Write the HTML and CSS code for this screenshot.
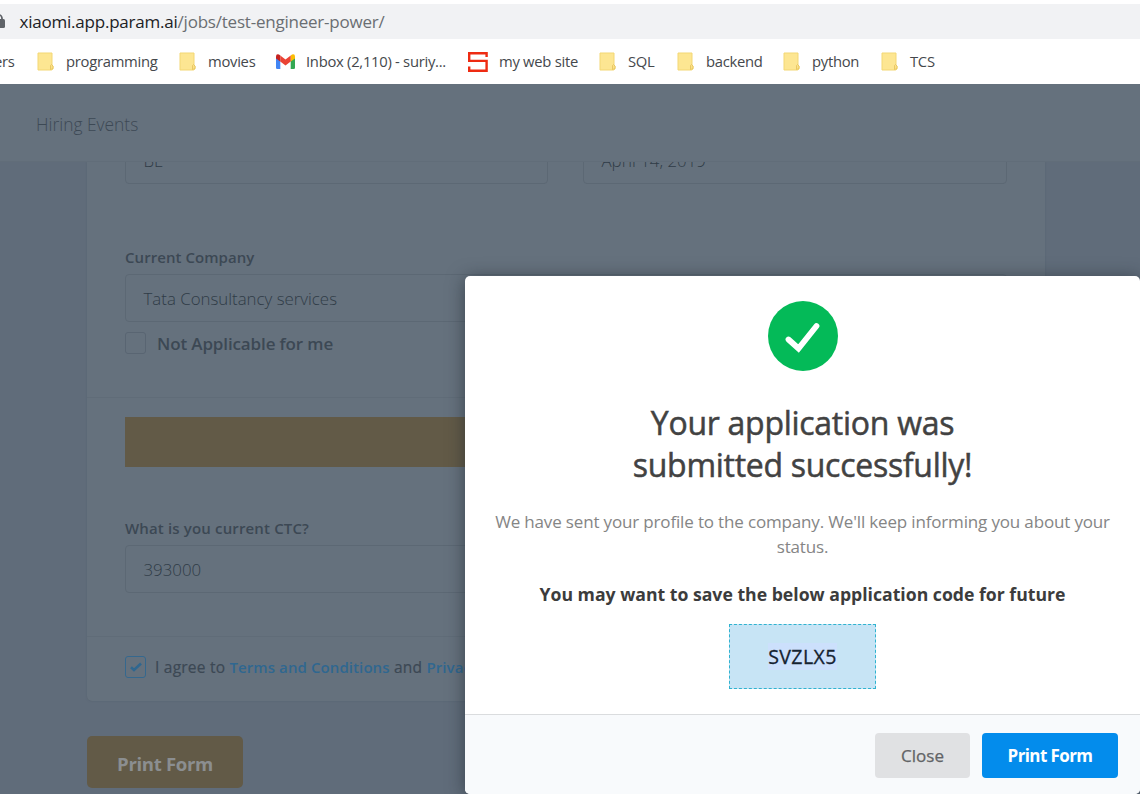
FILE: index.html
```
<!DOCTYPE html>
<html lang="en">
<head>
<meta charset="utf-8">
<title>Test Engineer - Power</title>
<link rel="stylesheet" href="styles.css">
</head>
<body>
<svg class="defs" width="0" height="0">
  <symbol id="folder" viewBox="0 0 17 19">
    <path d="M1 1h14v12l1 1v3l-1.500 1H1z" fill="#fde692" stroke="#f3d774"/>
    <path d="M13.500 17.500v-4l1-1 1.500 1.500v2.500z" fill="#fbe08a" stroke="#e5c257" stroke-width=".8"/>
  </symbol>
</svg>
<div class="urlbar">
  <svg class="lock" width="6" height="16" viewBox="0 0 6 16"><rect x="-7" y="5" width="12" height="9" rx="1.500" fill="#5f6368"/><path d="M-4 6V4.500a3 3.500 0 0 1 6 0V6" fill="none" stroke="#5f6368" stroke-width="1.800"/></svg>
  <div class="url"><span class="host">xiaomi.app.param.ai</span>/jobs/test-engineer-power/</div>
</div>
<div class="bookmarks">
  <div class="bm b0"><span>ers</span></div>
  <div class="bm"><svg width="17" height="19"><use href="#folder"/></svg><span>programming</span></div>
  <div class="bm"><svg width="17" height="19"><use href="#folder"/></svg><span>movies</span></div>
  <div class="bm b3"><svg width="19" height="15" viewBox="0 0 19 15"><path d="M0 3l4.300 3v9H1.300Q0 15 0 13.700z" fill="#4285f4"/><path d="M19 3l-4.300 3v9h3Q19 15 19 13.700z" fill="#34a853"/><path d="M14.700 1.500L16 .5q3-1 3 2V4.500l-4.300 3z" fill="#fbbc04"/><path d="M0 4.500V2.500q0-3 3-2l1.300 1v6z" fill="#c5221f"/><path d="M4.300 1.500L9.500 5.500l5.200-4v6L9.500 11.500 4.300 7.500z" fill="#ea4335"/></svg><span>Inbox (2,110) - suriy...</span></div>
  <div class="bm b4"><svg width="21" height="20" viewBox="0 0 21 20"><path d="M19.600 5V1.200H2.200V8.900H19.600V18.800H2.200V14.500" fill="none" stroke="#ee2b12" stroke-width="2.400"/></svg><span>my web site</span></div>
  <div class="bm"><svg width="17" height="19"><use href="#folder"/></svg><span>SQL</span></div>
  <div class="bm"><svg width="17" height="19"><use href="#folder"/></svg><span>backend</span></div>
  <div class="bm"><svg width="17" height="19"><use href="#folder"/></svg><span>python</span></div>
  <div class="bm"><svg width="17" height="19"><use href="#folder"/></svg><span>TCS</span></div>
</div>
<nav class="nav"><span>Hiring Events</span></nav>
<main class="page">
  <section class="card">
    <div class="row">
      <div class="input"><span>BE</span></div>
      <div class="input"><span>April 14, 2019</span></div>
    </div>
    <div class="group company">
      <label class="label">Current Company</label>
      <div class="input"><span>Tata Consultancy services</span></div>
      <div class="check"><span class="box"></span><span>Not Applicable for me</span></div>
    </div>
    <div class="group ctc">
      <div class="banner"></div>
      <label class="label question">What is you current CTC?</label>
      <div class="input"><span>393000</span></div>
    </div>
    <div class="group agree">
      <span class="box checked"><svg width="14" height="12" viewBox="0 0 14 12"><path d="M2 6.200l3 2.800L12 2.500" fill="none" stroke="#2f6790" stroke-width="2.600"/></svg></span>
      <span>I agree to <a>Terms and Conditions</a> and <a>Privacy Policy</a></span>
    </div>
  </section>
  <button class="submit">Print Form</button>
</main>
<div class="modal">
  <div class="body">
    <svg class="tick" width="70" height="70" viewBox="0 0 70 70"><circle cx="35" cy="35" r="35" fill="#04ba58"/><path d="M20.500 38.500L30.500 47.500 48.500 25" fill="none" stroke="#fff" stroke-width="5.800" stroke-linecap="round"/></svg>
    <h1>Your application was<br>submitted successfully!</h1>
    <p class="msg">We have sent your profile to the company. We'll keep informing you about your<br>status.</p>
    <p class="save">You may want to save the below application code for future</p>
    <div class="code"><span class="selected">SVZLX5</span></div>
  </div>
  <footer class="foot">
    <button class="btn close">Close</button>
    <button class="btn print">Print Form</button>
  </footer>
</div>
</body>
</html>
```
FILE: styles.css
```
* { box-sizing: border-box; }
body { margin: 0; width: 1140px; height: 794px; overflow: hidden; position: relative; display: flex; flex-direction: column; background: #fff; font-family: "Open Sans", "Noto Sans", sans-serif; white-space: nowrap; }
svg { display: block; flex: none; }
button { border: 0; font-family: inherit; padding: 0; }
.defs { position: absolute; }
.urlbar { flex: none; height: 35px; margin-top: 4px; background: #f1f2f4; display: flex; align-items: center; }
.url { margin-left: 13.500px; font-size: 17px; letter-spacing: -.22px; color: #6a6e72; }
.host { color: #202124; }
.bookmarks { flex: none; height: 45px; display: grid; grid-template-columns: 37px 142px 97px 191px 132px 78px 106px 98px 1fr; align-items: center; font-size: 14.800px; letter-spacing: -.28px; color: #45484c; }
.bm { display: flex; align-items: center; gap: 12px; }
.bm span { padding-bottom: 2px; }
.b0 { margin-left: -6px; }
.b3, .b4 { gap: 11px; }
.nav { flex: none; height: 77px; background: #65717d; display: flex; align-items: center; padding: 3px 0 0 36px; color: #3d4955; font-size: 17.400px; font-weight: 300; }
.page { flex: 1; min-height: 0; overflow: hidden; border-top: 1px solid #616d79; background: #606c7a; padding: 0 95px 0 87px; }
.card { height: 539px; background: #65717d; border-radius: 0 0 5px 5px; box-shadow: 0 0 2px #56626e; }
.row { height: 22px; overflow: hidden; padding: 0 38px; display: grid; grid-template-columns: 423px 424px; grid-template-rows: 22px; gap: 35px; align-items: end; }
.input { height: 48px; border: 1px solid #5c6874; border-radius: 4px; display: flex; align-items: center; padding: 0 17.500px; font-size: 16.850px; font-weight: 300; color: #303c47; }
.group { padding: 0 38px; border-bottom: 1px solid #606c78; }
.company { height: 214px; padding-top: 63px; }
.label { display: flex; height: 27px; align-items: center; padding-bottom: 8px; font-size: 15px; letter-spacing: .05px; font-weight: 600; color: #3c4854; }
.question { letter-spacing: .15px; }
.check { display: flex; align-items: center; gap: 11px; margin-top: 10px; height: 22px; font-size: 17px; letter-spacing: -.13px; font-weight: 600; color: #3c4854; }
.box { width: 21px; height: 22px; border: 1px solid #596572; border-radius: 3px; display: flex; align-items: center; justify-content: center; flex: none; }
.checked { border-color: #35688e; }
.ctc { height: 239px; padding-top: 19px; }
.banner { height: 50px; background: #625a47; margin-bottom: 51px; }
.agree { height: 64px; border: 0; display: flex; align-items: center; gap: 9px; font-size: 15.500px; letter-spacing: .22px; -webkit-text-stroke: .2px; color: #3c4854; padding-bottom: 4px; }
.agree a { color: #2f6790; font-weight: 600; font-size: 15px; letter-spacing: .09px; -webkit-text-stroke: 0; }
.submit { display: block; margin-top: 35px; padding-top: 2px; width: 156px; height: 52px; border-radius: 5px; background: #625a47; color: #8b8e90; font-size: 18.600px; letter-spacing: -.35px; font-weight: 700; }
.modal { position: absolute; left: 465px; top: 276px; width: 675px; height: 518px; border-radius: 5px; background: #fff; box-shadow: 0 2px 18px rgba(30,38,46,.6); overflow: hidden; display: flex; flex-direction: column; }
.body { flex: none; height: 438px; display: flex; flex-direction: column; align-items: center; text-align: center; padding-top: 25px; }
h1 { margin: 31px 0 0; font-size: 32px; letter-spacing: -.28px; line-height: 42px; font-weight: 400; -webkit-text-stroke: .5px; color: #424242; }
.msg { margin: 23px 0 0; font-size: 17px; letter-spacing: -.16px; line-height: 25px; color: #858585; }
.save { margin: 23px 0 0; height: 25px; line-height: 25px; font-size: 17.650px; font-weight: 700; color: #3c3c3c; }
.code { margin-top: 17px; width: 147px; height: 65px; border: 1px dashed #2fb3d0; background: #c7e4f5; color: #142231; font-size: 19.500px; letter-spacing: .4px; -webkit-text-stroke: .3px; display: flex; align-items: center; justify-content: center; }
.selected { background: #cce0fc; }
.foot { height: 80px; border-top: 1px solid #dadcde; background: #f8fafc; display: flex; gap: 12px; justify-content: flex-end; padding: 18px 22px 0 0; }
.btn { height: 45px; border-radius: 4px; font-size: 17px; }
.close { width: 95px; background: #e0e1e3; color: #626466; -webkit-text-stroke: .25px; }
.print { width: 136px; background: #038cec; color: #fff; font-weight: 700; letter-spacing: -.6px; }
```
